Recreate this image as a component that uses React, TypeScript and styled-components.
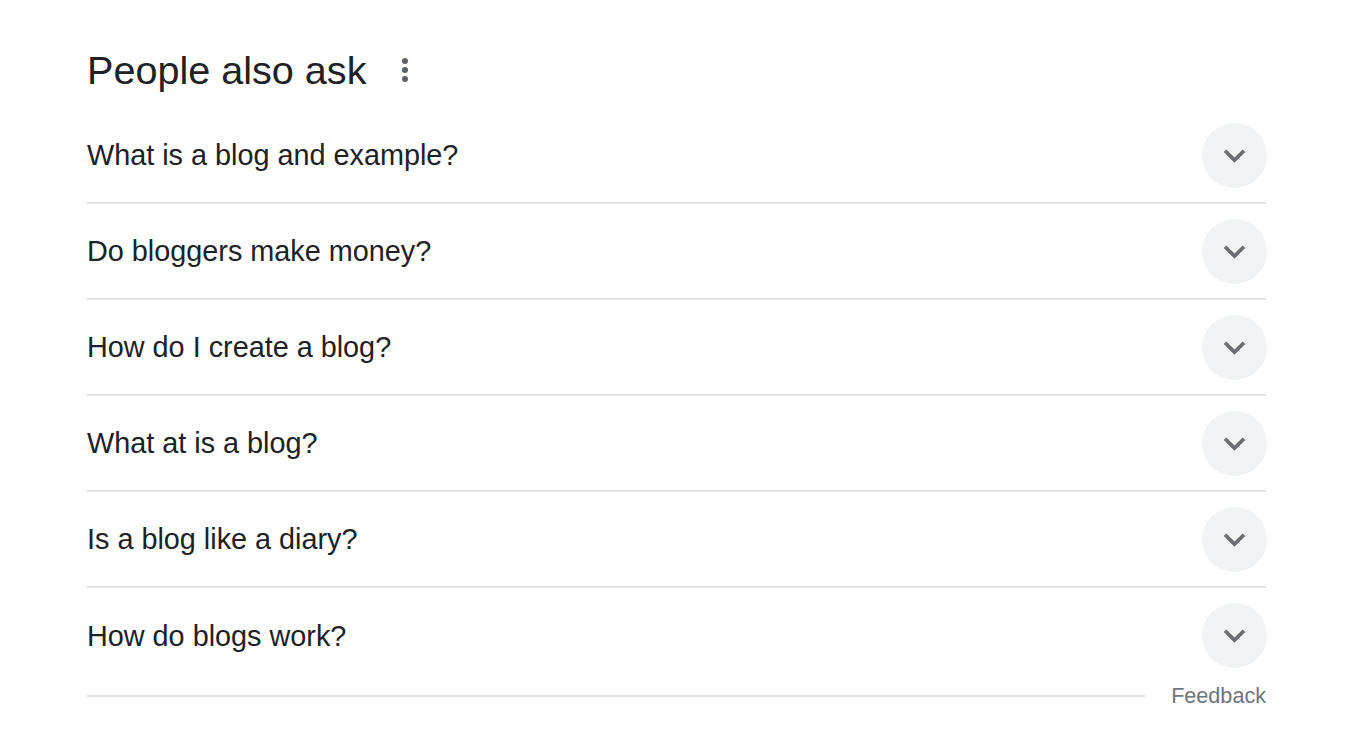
import React from "react";
import styled, { createGlobalStyle } from "styled-components";

const GlobalStyle = createGlobalStyle`
  html, body {
    margin: 0;
    padding: 0;
    background: #fff;
  }
  body {
    font-family: "Liberation Sans", Arial, sans-serif;
    color: #202124;
  }
`;

const questions = [
  "What is a blog and example?",
  "Do bloggers make money?",
  "How do I create a blog?",
  "What at is a blog?",
  "Is a blog like a diary?",
  "How do blogs work?",
];

const Wrapper = styled.div`
  width: 1179px;
  margin-left: 87px;
`;

const Header = styled.div`
  display: flex;
  align-items: center;
  height: 76px;
  margin-top: 32px;
`;

const Title = styled.h2`
  margin: 0;
  font-size: 39.6px;
  font-weight: 400;
  line-height: 48px;
  color: #202124;
`;

const MenuButton = styled.div`
  display: flex;
  align-items: center;
  justify-content: center;
  width: 30px;
  height: 40px;
  margin-left: 24px;
`;

const List = styled.div`
  display: flex;
  flex-direction: column;
`;

const Row = styled.div<{ $last?: boolean }>`
  display: flex;
  align-items: center;
  justify-content: space-between;
  height: ${(p) => (p.$last ? 95 : 94)}px;
  border-bottom: ${(p) => (p.$last ? "none" : "2px solid #e0e2e6")};
`;

const Question = styled.div`
  font-size: 28.8px;
  line-height: 40px;
  color: #202124;
`;

const ExpandCircle = styled.div`
  display: flex;
  align-items: center;
  justify-content: center;
  width: 65px;
  height: 65px;
  border-radius: 50%;
  background: #f1f3f4;
  margin-right: -1px;
`;

const Footer = styled.div`
  display: flex;
  align-items: center;
  height: 26px;
`;

const FooterLine = styled.div`
  flex: 1;
  height: 2px;
  background: #e0e2e6;
`;

const FeedbackLink = styled.span`
  margin-left: 26px;
  font-size: 21.6px;
  line-height: 26px;
  color: #70757a;
`;

const Chevron = () => (
  <svg width="43" height="43" viewBox="0 0 24 24" fill="#6a6e73">
    <path d="M16.59 8.59L12 13.17 7.41 8.59 6 10l6 6 6-6z" />
  </svg>
);

const MoreVert = () => (
  <svg width="12" height="30" viewBox="0 0 12 30" fill="#5f6368">
    <circle cx="6" cy="6" r="3" />
    <circle cx="6" cy="15" r="3" />
    <circle cx="6" cy="24" r="3" />
  </svg>
);

export default function App() {
  return (
    <>
      <GlobalStyle />
      <Wrapper>
        <Header>
          <Title>People also ask</Title>
          <MenuButton>
            <MoreVert />
          </MenuButton>
        </Header>
        <List>
          {questions.map((q, i) => (
            <Row key={q} $last={i === questions.length - 1}>
              <Question>{q}</Question>
              <ExpandCircle>
                <Chevron />
              </ExpandCircle>
            </Row>
          ))}
        </List>
        <Footer>
          <FooterLine />
          <FeedbackLink>Feedback</FeedbackLink>
        </Footer>
      </Wrapper>
    </>
  );
}
